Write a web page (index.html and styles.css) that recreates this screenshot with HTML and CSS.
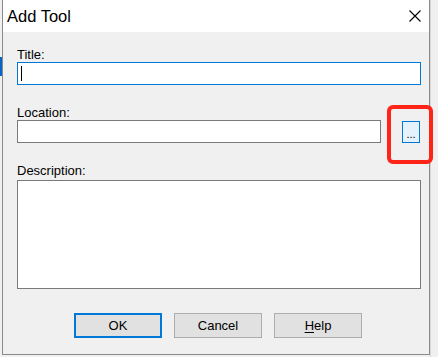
FILE: index.html
```html
<!DOCTYPE html>
<html lang="en">
<head>
  <meta charset="UTF-8" />
  <title>Add Tool</title>
  <link rel="stylesheet" href="styles.css">
</head>
<body>
  <div class="screen">
    <div class="gutter left"><span class="mark"></span></div>

    <div class="dialog">
      <div class="titlebar">
        <span class="title">Add Tool</span>
        <svg class="close" width="12" height="12" viewBox="0 0 12 12">
          <path d="M0.5 0.5 L11.5 11.5 M11.5 0.5 L0.5 11.5" stroke="#000" stroke-width="1.1" fill="none"/>
        </svg>
      </div>

      <div class="content">
        <div class="label">Title:</div>
        <div class="field focused"><span class="caret"></span></div>

        <div class="label spaced">Location:</div>
        <div class="row">
          <div class="field location"></div>
          <button class="browse">...</button>
        </div>

        <div class="label spaced desc">Description:</div>
        <div class="field area"></div>

        <div class="actions">
          <button class="btn default">OK</button>
          <button class="btn">Cancel</button>
          <button class="btn"><u>H</u>elp</button>
        </div>
      </div>

      <!-- annotation box round the browse button -->
      <div class="highlight"></div>
    </div>

    <div class="gutter right"></div>
  </div>
</body>
</html>
```

FILE: styles.css
```css
* {
  box-sizing: border-box;
  margin: 0;
  padding: 0;
  font-family: 'Liberation Sans', Arial, sans-serif;
}

body {
  background: #f0f0f0;
  color: #000;
  width: 438px;
  height: 357px;
  overflow: hidden;
}

.screen {
  display: flex;
  height: 357px;
}

.gutter {
  background: #f0f0f0;
}

.gutter.left {
  width: 2px;
  padding-top: 57px;
}

.gutter.left .mark {
  display: block;
  width: 2px;
  height: 19px;
  background: #0a64c8;
}

.gutter.right {
  flex: 1;
  background:
    linear-gradient(#f0f0f0, #f0f0f0) 0 0 / 100% 100% no-repeat;
  border-left: 1px solid #d6d6d6;
}

.dialog {
  position: relative;
  width: 428px;
  height: 355px;
  background: #f0f0f0;
  border-left: 1px solid #8a8a8a;
  border-right: 1px solid #8a8a8a;
  border-bottom: 1px solid #8a8a8a;
}

.titlebar {
  height: 32px;
  background: #fff;
  display: flex;
  align-items: center;
  padding-left: 4px;
}

.title {
  font-size: 16.5px;
}

.close {
  margin-left: auto;
  margin-right: 8px;
}

.content {
  padding: 15px 0 0 14px;
}

.label {
  font-size: 13px;
  line-height: 15px;
}

.label.spaced {
  margin-top: 20px;
}

.label.desc {
  margin-bottom: 2px;
}

.field {
  width: 404px;
  height: 23px;
  background: #fff;
  border: 1px solid #7a7a7a;
}

.field.focused {
  border-color: #0078d7;
  padding: 3px 0 0 3px;
}

.caret {
  display: block;
  width: 1px;
  height: 15px;
  background: #000;
}

.row {
  display: flex;
  align-items: flex-start;
}

.field.location {
  width: 364px;
}

.browse {
  width: 18px;
  height: 22px;
  margin: 1px 0 0 21px;
  background: #e5f1fb;
  border: 1px solid #0078d7;
  font-size: 11px;
  line-height: 12px;
  padding-top: 4px;
  color: #000;
}

.field.area {
  height: 109px;
}

.actions {
  display: flex;
  gap: 12px;
  margin: 24px 0 0 57px;
}

.btn {
  width: 88px;
  height: 25px;
  background: #e1e1e1;
  border: 1px solid #adadad;
  font-size: 13px;
  color: #000;
}

.btn.default {
  border: 2px solid #0078d7;
}

.btn u {
  text-decoration: underline;
  text-underline-offset: 2px;
}

.highlight {
  position: absolute;
  left: 384px;
  top: 105px;
  width: 46px;
  height: 59px;
  border: 4px solid #ff2318;
  border-radius: 6px;
}
```
